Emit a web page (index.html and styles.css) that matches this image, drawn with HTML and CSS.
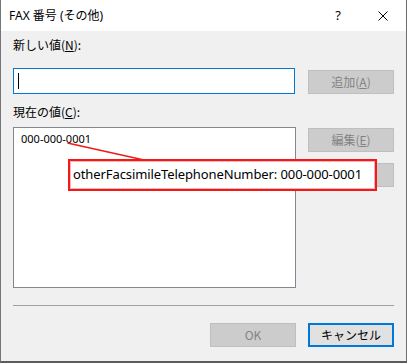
FILE: index.html
```html
<!DOCTYPE html>
<html lang="ja">
<head>
<meta charset="utf-8">
<title>FAX 番号 (その他)</title>
<link rel="stylesheet" href="styles.css">
</head>
<body>
<div class="window">
  <div class="titlebar">
    <span class="title">FAX 番号 (その他)</span>
    <span class="help">?</span>
    <span class="close">
      <svg width="10" height="10" viewBox="0 0 10 10"><path d="M0.5 0.5L9.5 9.5M9.5 0.5L0.5 9.5" stroke="#000" stroke-width="1" fill="none"/></svg>
    </span>
  </div>
  <div class="content">
    <div class="label">新しい値(<u>N</u>):</div>
    <div class="row row-input">
      <div class="input"><span class="caret"></span></div>
      <div class="btn disabled">追加(<u>A</u>)</div>
    </div>
    <div class="label label2">現在の値(<u>C</u>):</div>
    <div class="row row-list">
      <div class="listbox"><div class="item">000-000-0001</div></div>
      <div class="btn-col">
        <div class="btn disabled">編集(<u>E</u>)</div>
        <div class="btn disabled" aria-label="削除"></div>
      </div>
    </div>
    <div class="separator"></div>
    <div class="footer">
      <div class="btn disabled">OK</div>
      <div class="btn default">キャンセル</div>
    </div>
  </div>
  <svg class="pointer" width="407" height="363" viewBox="0 0 407 363"><line x1="67.5" y1="143" x2="144" y2="160" stroke="#f01a1a" stroke-width="1.6"/></svg>
  <div class="callout">otherFacsimileTelephoneNumber: 000-000-0001</div>
</div>
</body>
</html>
```
FILE: styles.css
```css
* { box-sizing: border-box; }
html, body { margin: 0; padding: 0; background: #f0f0f0; }
body {
  font-family: "Noto Sans", "Noto Sans CJK JP", sans-serif;
  font-size: 12px;
  color: #000;
}
u { text-decoration: underline; text-underline-offset: 1px; }
.window {
  position: relative;
  width: 407px;
  height: 363px;
  background: #f0f0f0;
  border-left: 1px solid #767676;
  border-right: 1px solid #6e6e6e;
  border-bottom: 2px solid #5c5c5c;
  display: flex;
  flex-direction: column;
}
.titlebar {
  height: 31px;
  background: #fff;
  display: flex;
  align-items: center;
  padding-left: 8px;
  flex-shrink: 0;
}
.title {
  flex: 1;
  font-family: "Noto Sans", "Noto Sans CJK JP", sans-serif;
  font-size: 12px;
  padding-bottom: 1px;
}
.help {
  width: 12px;
  text-align: center;
  font-size: 13px;
  margin-right: 34px;
  padding-bottom: 1px;
}
.close {
  width: 10px;
  height: 10px;
  display: flex;
  margin-right: 18px;
}
.close svg { display: block; }
.content {
  padding: 6px 11px 0 12px;
  display: flex;
  flex-direction: column;
}
.label {
  height: 16px;
  line-height: 16px;
  font-family: "Noto Sans CJK JP", sans-serif;
  font-size: 12px;
}
.label2 { margin-top: 10px; }
.row {
  display: flex;
  gap: 12px;
}
.row-input {
  margin-top: 15px;
  gap: 13px;
  align-items: flex-start;
}
.input {
  width: 282px;
  height: 26px;
  background: #fff;
  border: 1px solid #0078d7;
  padding: 4px 0 0 4px;
}
.caret {
  display: block;
  width: 1px;
  height: 16px;
  background: #000;
}
.row-input .btn { margin-top: 2px; }
.btn {
  width: 86px;
  height: 24px;
  display: flex;
  align-items: center;
  justify-content: center;
  font-family: "Noto Sans CJK JP", sans-serif;
  font-size: 12px;
  border: 1px solid #adadad;
  background: #e1e1e1;
  padding-bottom: 1px;
}
.btn.disabled {
  background: #cccccc;
  border-color: #bfbfbf;
  color: #838383;
}
.btn.default {
  border: 2px solid #0078d7;
  background: #e1e1e1;
  color: #000;
}
.row-list {
  margin-top: 7px;
}
.listbox {
  width: 283px;
  height: 161px;
  background: #fff;
  border: 1px solid #828790;
  padding: 3px 0 0 7px;
}
.item {
  font-family: "Noto Sans", sans-serif;
  font-size: 11px;
  line-height: 16px;
  color: #000;
}
.btn-col {
  display: flex;
  flex-direction: column;
  gap: 11px;
  padding-top: 1px;
}
.separator {
  margin-top: 17px;
  height: 1px;
  width: 381px;
  background: #a0a0a0;
}
.footer {
  display: flex;
  justify-content: flex-end;
  gap: 12px;
  margin-top: 17px;
  width: 381px;
}
.pointer {
  position: absolute;
  left: -1px;
  top: 0;
  pointer-events: none;
}
.callout {
  position: absolute;
  left: 67px;
  top: 159px;
  width: 309px;
  height: 32px;
  background: #fff;
  border: 2px solid #f01a1a;
  box-shadow: inset 0 0 0 1px #ffb3b3;
  font-family: "Noto Sans", sans-serif;
  font-size: 13px;
  letter-spacing: -0.1px;
  line-height: 26px;
  padding-left: 3px;
  color: #000;
  white-space: nowrap;
}
```
